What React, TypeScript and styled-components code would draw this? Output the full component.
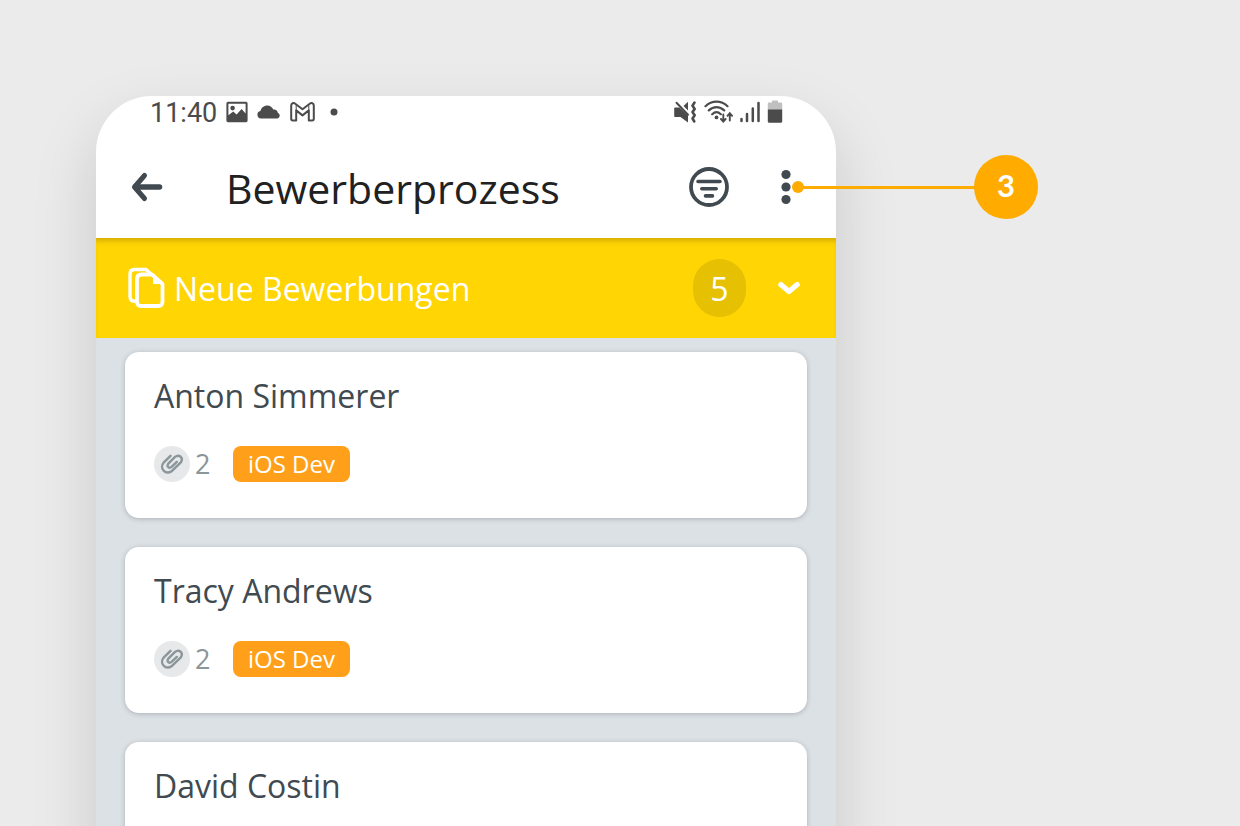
import React from 'react';
import styled, { createGlobalStyle } from 'styled-components';

const GlobalStyle = createGlobalStyle`
  *, *::before, *::after { box-sizing: border-box; }
  body {
    margin: 0;
    background: #ebebeb;
    font-family: 'Open Sans', 'Noto Sans', sans-serif;
    font-weight: 400;
    color: #404a50;
  }
  h1, h2, h3, ul { margin: 0; padding: 0; font-weight: inherit; }
  button { border: 0; padding: 0; background: none; color: inherit; font: inherit; cursor: pointer; }
  svg { display: block; flex: none; }
`;

const Stage = styled.main`
  height: 100vh;
  overflow: hidden;
  padding: 96px 96px 0;
`;

const Phone = styled.section`
  max-width: 740px;
  border-radius: 56px 56px 0 0;
  background: #fff;
  box-shadow: 0 28px 64px rgba(0, 0, 0, 0.15);
`;

const StatusBar = styled.div`
  display: flex;
  align-items: center;
  justify-content: space-between;
  height: 32px;
  padding: 0 53px 0 54px;
  color: #4b4b4b;
`;

const StatusGroup = styled.div<{ $gap: number }>`
  display: flex;
  align-items: center;
  gap: ${(p) => p.$gap}px;
`;

const Clock = styled.time`
  padding-top: 2px;
  font: 400 27px/32px Roboto, sans-serif;
`;

const Notification = styled.span`
  padding-left: 6px;
`;

const AppBar = styled.header`
  display: flex;
  align-items: center;
  height: 110px;
  padding: 8px 30px 0 30px;
`;

const Title = styled.h1`
  flex: 1;
  margin-left: 60px;
  padding-top: 2px;
  font-size: 41px;
  line-height: 56px;
  color: #212121;
`;

const IconButton = styled.button`
  display: grid;
  place-items: center;
  width: 40px;
  height: 40px;
`;

const MenuAnchor = styled.div`
  position: relative;
  margin-left: 37px;
`;

const Callout = styled.div`
  position: absolute;
  top: 50%;
  left: 26px;
  display: flex;
  align-items: center;
  transform: translateY(-50%);
`;

const CalloutDot = styled.span`
  width: 12px;
  height: 12px;
  border-radius: 50%;
  background: #ffab00;
`;

const CalloutLine = styled.span`
  width: 174px;
  height: 3px;
  margin-left: -2px;
  background: #ffab00;
`;

const CalloutBadge = styled.span`
  display: grid;
  place-items: center;
  width: 64px;
  height: 64px;
  margin-left: -2px;
  padding-bottom: 4px;
  border-radius: 50%;
  background: #ffab00;
  color: #fff;
  font: 700 31px/32px Lato, sans-serif;
`;

const Stack = styled.div`
  background: #dce1e5;
`;

const StackHeader = styled.div`
  display: flex;
  align-items: center;
  height: 100px;
  padding: 0 27px 0 32px;
  background: #ffd504;
  box-shadow: inset 0 6px 6px -4px rgba(120, 90, 0, 0.4);
  color: #fff;
`;

const StackTitle = styled.h2`
  flex: 1;
  margin-left: 9px;
  padding-top: 2px;
  font-size: 32px;
  line-height: 44px;
`;

const Count = styled.span`
  display: grid;
  place-items: center;
  width: 53px;
  height: 58px;
  margin-right: 23px;
  padding-top: 2px;
  border-radius: 27px;
  background: #e6c103;
  font-size: 32px;
  line-height: 44px;
`;

const CardList = styled.ul`
  display: flex;
  flex-direction: column;
  gap: 29px;
  padding: 14px 29px;
  list-style: none;
`;

const Card = styled.li`
  height: 166px;
  padding: 22px 29px;
  border-radius: 14px;
  background: #fff;
  box-shadow: 0 1px 5px rgba(60, 70, 80, 0.3);
`;

const Name = styled.h3`
  font-size: 32px;
  line-height: 44px;
`;

const Meta = styled.div`
  display: flex;
  align-items: center;
  margin-top: 28px;
  height: 36px;
`;

const ClipCircle = styled.span`
  display: grid;
  place-items: center;
  width: 36px;
  height: 36px;
  border-radius: 50%;
  background: #e6e8ea;
  color: #8b969b;
`;

const ClipCount = styled.span`
  width: 38px;
  margin-left: 5px;
  font-size: 27px;
  line-height: 36px;
  color: #8b969b;
`;

const Tag = styled.span`
  padding: 0 15px;
  border-radius: 8px;
  background: #ff9f1a;
  color: #fff;
  font-size: 24px;
  line-height: 36px;
`;

const PictureIcon = () => (
  <svg width="22" height="22" viewBox="0 0 22 22" fill="currentColor">
    <path fillRule="evenodd" d="M2 .8h18a1.600 1.600 0 0 1 1.600 1.600v17.200a1.600 1.600 0 0 1-1.600 1.600H2a1.600 1.600 0 0 1-1.600-1.600V2.400A1.600 1.600 0 0 1 2 .8zM2.400 2.800v11.400l4.800-3.600 3.400 2.800 5-5.400 4 4.400V2.800zM6.600 4.800a2.300 2.300 0 1 1 0 4.600 2.300 2.300 0 0 1 0-4.600z" />
  </svg>
);

const CloudIcon = () => (
  <svg width="24" height="14" viewBox="0 0 24 14" fill="currentColor">
    <path d="M4 13.500a3.800 3.800 0 0 1-.6-7.500C4.200 2.600 7 .4 10.300.4c2.900 0 5 1.600 6 4.200 2.300-.5 4.300 1 4.500 3.200a3 3 0 0 1-.3 5.700z" />
  </svg>
);

const MailIcon = () => (
  <svg width="25" height="20" viewBox="0 0 25 20" fill="none" stroke="currentColor" strokeWidth="2" strokeLinejoin="round">
    <path d="M1.200 3.600C1.200 1.200 3.600.4 5.300 1.800l7.200 5.500 7.200-5.500c1.700-1.400 4.100-.6 4.100 1.800v13.200c0 1-.6 1.700-1.600 1.700h-3.400V8.400l-6.300 5-6.300-5v10.100H2.800c-1 0-1.600-.7-1.600-1.700z" />
    <path d="M6.200 9V3M18.800 9V3" strokeWidth="1" />
  </svg>
);

const DotIcon = () => (
  <svg width="8" height="8" viewBox="0 0 8 8" fill="currentColor">
    <circle cx="4" cy="4" r="3.500" />
  </svg>
);

const MutedIcon = () => (
  <svg width="23" height="24" viewBox="0 0 23 24" fill="none" stroke="currentColor" strokeLinecap="round" strokeLinejoin="round">
    <path d="M1 7.500h4.500L14 15.500V22.500L6.500 17H1q-.8 0-.8-.8V8.300q0-.8.8-.8z" fill="currentColor" stroke="none" />
    <path d="M9.500 6 14 1.800v8.600z" fill="currentColor" stroke="none" />
    <path d="M2.500 2.800l11.500 12" strokeWidth="2" />
    <path d="M20.500 2.500l-2 3.200 2.200 3.200-2.200 3.200 2.200 3.200-2.200 3.200 1.800 3" strokeWidth="2.600" />
  </svg>
);

const WifiIcon = () => (
  <svg width="29" height="24" viewBox="0 0 29 24" fill="none" stroke="currentColor" strokeWidth="2.200" strokeLinecap="round">
    <path d="M1.500 6.200c6.400-6 15.600-6 22 0M4.800 10.400c4.600-4.400 10.800-4.400 15.400 0M8.200 14.200c2.600-2.400 6-2.400 8.600 0" />
    <circle cx="12.500" cy="17.400" r="1.900" fill="currentColor" stroke="none" />
    <path d="M19.300 14.500v6.500M17 19l2.300 2.600 2.300-2.600M25.800 20.500v-6.500M23.500 15.800l2.300-2.600 2.300 2.600" strokeWidth="1.900" />
  </svg>
);

const SignalIcon = () => (
  <svg width="20" height="22" viewBox="0 0 20 22" fill="none" stroke="currentColor" strokeWidth="2.500" strokeLinecap="round">
    <path d="M1.500 18v2M7 13v7M12.800 7.500V20M18.500 2v18" />
  </svg>
);

const BatteryIcon = () => (
  <svg width="16" height="24" viewBox="0 0 16 24" fill="currentColor">
    <path d="M5 2.500V1.200Q5 .5 5.700.5h4.600q.7 0 .7.700v1.300h3.200q1 0 1 1V10H.8V3.500q0-1 1-1z" opacity=".35" />
    <path d="M.8 9.500h14.400v11.700q0 1.600-1.600 1.600H2.400Q.8 22.800.8 21.200z" />
  </svg>
);

const BackIcon = () => (
  <svg width="34" height="32" viewBox="0 0 34 32" fill="none" stroke="currentColor" strokeLinecap="round" strokeLinejoin="round">
    <path d="M15.500 4.500L5.500 16l10 11.500" strokeWidth="5" />
    <path d="M6.500 16h24" strokeWidth="5.600" />
  </svg>
);

const FilterIcon = () => (
  <svg width="40" height="40" viewBox="0 0 40 40" fill="none" stroke="currentColor" strokeLinecap="round">
    <circle cx="20" cy="20" r="18" strokeWidth="3.800" />
    <path d="M9 14.500h22M12.800 21.800h14.400M16.500 28.900h7" strokeWidth="3.600" />
  </svg>
);

const MoreIcon = () => (
  <svg width="10" height="36" viewBox="0 0 10 36" fill="currentColor">
    <circle cx="5" cy="5.500" r="4.600" />
    <circle cx="5" cy="18" r="4.600" />
    <circle cx="5" cy="30.500" r="4.600" />
  </svg>
);

const PagesIcon = () => (
  <svg width="37" height="42" viewBox="0 0 37 42" fill="none" stroke="currentColor" strokeWidth="3.800" strokeLinejoin="round" strokeLinecap="round">
    <path d="M6.500 34.200C3.500 34.200 2 32.500 2 29.500V7C2 4 3.500 2.500 6.500 2.500H18L22.500 6.500" strokeWidth="3.400" />
    <path d="M13.500 7.500H24l10.500 9.500v17.500c0 3-1.500 4.500-4.500 4.500H13.500C10.500 39 9 37.500 9 34.500V12c0-3 1.500-4.500 4.500-4.500z" />
    <path d="M25.500 8v8.500h9z" fill="currentColor" strokeWidth="1" />
  </svg>
);

const ChevronIcon = () => (
  <svg width="22" height="14" viewBox="0 0 22 14" fill="none" stroke="currentColor" strokeWidth="5.200" strokeLinecap="round" strokeLinejoin="round">
    <path d="M2.800 3.600L11 10.600l8.200-7" />
  </svg>
);

const ClipIcon = () => (
  <svg width="24" height="24" viewBox="0 0 24 24" fill="none" stroke="currentColor" strokeWidth="2.400" strokeLinecap="round" strokeLinejoin="round">
    <path d="M10.500 3.800L3.600 10.700c-4.400 5 1.400 13.200 8.400 8.200l8.800-8.600c3-4.400-1.600-8.600-5.800-5.400l-6.700 6.800c-2 3 .9 5 3.300 3.200l5.200-5" />
  </svg>
);

type Applicant = { name: string; files?: number; tag?: string };

const applicants: Applicant[] = [
  { name: 'Anton Simmerer', files: 2, tag: 'iOS Dev' },
  { name: 'Tracy Andrews', files: 2, tag: 'iOS Dev' },
  { name: 'David Costin' },
];

export default function App() {
  return (
    <>
      <GlobalStyle />
      <Stage>
        <Phone>
          <StatusBar>
            <StatusGroup $gap={9}>
              <Clock>11:40</Clock>
              <PictureIcon />
              <CloudIcon />
              <MailIcon />
              <Notification><DotIcon /></Notification>
            </StatusGroup>
            <StatusGroup $gap={7}>
              <MutedIcon />
              <WifiIcon />
              <SignalIcon />
              <BatteryIcon />
            </StatusGroup>
          </StatusBar>
          <AppBar>
            <IconButton aria-label="Zurück"><BackIcon /></IconButton>
            <Title>Bewerberprozess</Title>
            <IconButton aria-label="Filter"><FilterIcon /></IconButton>
            <MenuAnchor>
              <IconButton aria-label="Mehr"><MoreIcon /></IconButton>
              <Callout>
                <CalloutDot />
                <CalloutLine />
                <CalloutBadge>3</CalloutBadge>
              </Callout>
            </MenuAnchor>
          </AppBar>
          <Stack>
            <StackHeader>
              <PagesIcon />
              <StackTitle>Neue Bewerbungen</StackTitle>
              <Count>5</Count>
              <IconButton aria-label="Liste einklappen"><ChevronIcon /></IconButton>
            </StackHeader>
            <CardList>
              {applicants.map((a) => (
                <Card key={a.name}>
                  <Name>{a.name}</Name>
                  {a.tag && (
                    <Meta>
                      <ClipCircle><ClipIcon /></ClipCircle>
                      <ClipCount>{a.files}</ClipCount>
                      <Tag>{a.tag}</Tag>
                    </Meta>
                  )}
                </Card>
              ))}
            </CardList>
          </Stack>
        </Phone>
      </Stage>
    </>
  );
}
